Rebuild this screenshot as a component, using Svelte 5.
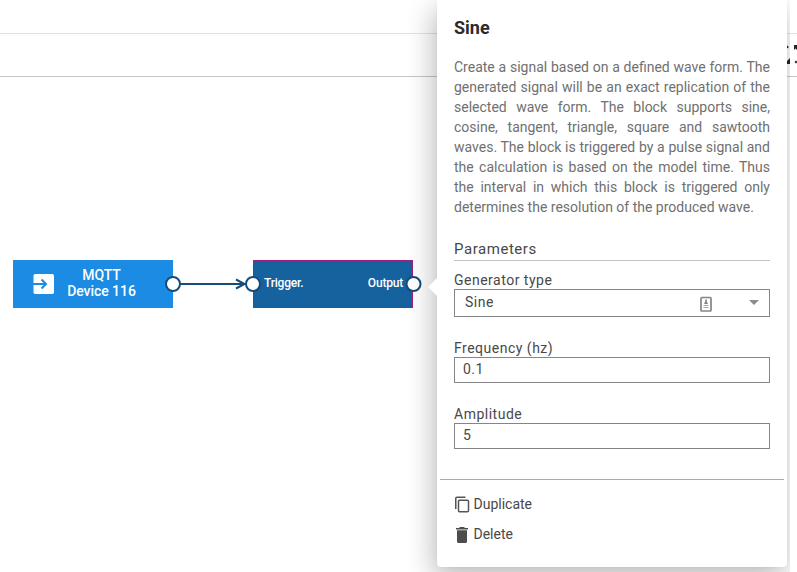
<script>
  const description = [
    'Create a signal based on a defined wave form. The',
    'generated signal will be an exact replication of the',
    'selected wave form. The block supports sine,',
    'cosine, tangent, triangle, square and sawtooth',
    'waves. The block is triggered by a pulse signal and',
    'the calculation is based on the model time. Thus',
    'the interval in which this block is triggered only',
    'determines the resolution of the produced wave.'
  ];
</script>

<div class="editor">
  <header class="topbar"></header>
  <div class="toolbar">
    <svg class="expand" width="12" height="24" viewBox="0 0 12 24" aria-hidden="true">
      <path d="M2 4.500l2 1.500l-2 1.500zM9 4h3v5l-1.500-1.500l-1.500 1.500zM2 23v-3l3-3v6zM9.500 21l1.500-1.500l1 1v1l-1 1z" fill="#262626" />
    </svg>
  </div>

  <main class="canvas">
    <div class="node device">
      <svg width="22" height="22" viewBox="0 0 22 22" aria-hidden="true">
        <rect x=".5" y="1" width="20.500" height="20" rx="1.800" fill="#fff" />
        <path d="M0 11H12M8.500 6.500L13 11L8.500 15.500" fill="none" stroke="#1b8be3" stroke-width="2" />
      </svg>
      <span>MQTT<br />Device 116</span>
    </div>
    <div class="node sine"><span>Trigger.</span><span>Output</span></div>
    <svg class="wires" width="437" height="60" viewBox="0 0 437 60" aria-hidden="true">
      <g fill="none" stroke="#174b7b" stroke-width="2">
        <path d="M180 30H244M236 25.500L244.500 30L236 34.500" />
        <circle cx="173" cy="30" r="7" fill="#fff" />
        <circle cx="253" cy="30" r="7" fill="#fff" />
        <circle cx="413.500" cy="30" r="7" fill="#fff" />
      </g>
    </svg>
  </main>

  <div class="popover">
    <svg class="pointer" width="10" height="20" viewBox="0 0 10 20" aria-hidden="true">
      <path d="M10 0L0 10L10 20z" fill="#fff" />
    </svg>
    <aside class="panel">
      <section class="body">
        <h1>Sine</h1>
        <p>{#each description as line}<span>{line}</span>{/each}</p>
        <h2>Parameters</h2>
        <div class="field first">
          <div class="label">Generator type</div>
          <div class="box select">
            <span>Sine</span>
            <svg class="card" width="12" height="16" viewBox="0 0 12 16" aria-hidden="true">
              <rect x="1" y="1.500" width="10" height="13.500" rx=".8" fill="#fff" stroke="#858585" stroke-width="1.700" />
              <path d="M5.200 3.500h1.600v2l1.200 2.500h-4l1.200-2.500z" fill="#858585" />
              <path d="M3.500 9.500h5M3.500 11.500h5" stroke="#aaa" />
            </svg>
            <svg class="caret" width="10" height="5" viewBox="0 0 10 5" aria-hidden="true"><path d="M0 0h10L5 5z" fill="#8c8c8c" /></svg>
          </div>
        </div>
        <div class="field">
          <div class="label">Frequency (hz)</div>
          <div class="box">0.1</div>
        </div>
        <div class="field">
          <div class="label">Amplitude</div>
          <div class="box">5</div>
        </div>
      </section>
      <footer>
        <div class="action">
          <svg width="16" height="18" viewBox="0 0 16 18" aria-hidden="true">
            <path d="M1.750 13V2.500Q1.750 1.250 3 1.250H11.500M5.500 4.250h8q1 0 1 1v9.500q0 1-1 1h-8q-1 0-1-1v-9.500q0-1 1-1z" fill="none" stroke="#555" stroke-width="1.500" />
          </svg>
          <span>Duplicate</span>
        </div>
        <div class="action">
          <svg width="16" height="18" viewBox="0 0 16 18" aria-hidden="true">
            <path d="M2 2h3l1-1h4l1 1h3v1.500h-12zM3 4.200h10v11.300q0 1.500-1.500 1.500h-7q-1.500 0-1.500-1.500z" fill="#4d4d4d" />
          </svg>
          <span>Delete</span>
        </div>
      </footer>
    </aside>
  </div>
</div>

<style>
  .editor {
    position: relative;
    width: 797px;
    height: 572px;
    overflow: hidden;
    background: #fff;
    font-family: Roboto, "Liberation Sans", sans-serif;
    color: #484848;
  }
  .editor * { box-sizing: border-box; }
  .topbar { height: 34px; border-bottom: 1px solid #e2e2e2; }
  .toolbar {
    height: 43px;
    border-bottom: 1px solid #c6c6c6;
    display: flex;
    justify-content: flex-end;
    padding-top: 7px;
  }
  .expand { display: block; }
  .canvas { height: 495px; }
  .node {
    position: absolute;
    top: 260px;
    width: 160px;
    height: 48px;
    display: flex;
    color: #fff;
    font-weight: 500;
  }
  .device {
    left: 13px;
    align-items: center;
    padding-left: 20px;
    gap: 10px;
    background: #1b8be3;
    font-size: 14px;
    line-height: 16px;
    text-align: center;
  }
  .device span { width: 73px; margin-top: -2px; white-space: nowrap; letter-spacing: -.05px; }
  .sine {
    left: 253px;
    justify-content: space-between;
    padding: 15px 9px 0 10px;
    background: #15629f;
    border: 1px solid #9c1f83;
    font-size: 12px;
    line-height: 14px;
    letter-spacing: -.2px;
  }
  .wires { position: absolute; left: 0; top: 254px; }
  .popover { position: absolute; left: 437px; top: 0; }
  .pointer { position: absolute; left: -9px; top: 277px; z-index: 1; }
  .panel {
    width: 350px;
    height: 567px;
    background: #fff;
    border-radius: 0 0 4px 4px;
    box-shadow: -3px 10px 28px rgba(0, 0, 0, .28), 0 0 3px rgba(0, 0, 0, .04);
    clip-path: inset(0 -3px -5px -30px);
  }
  .body { height: 479px; padding: 18px 17px 0; }
  h1 { margin: 0; font-size: 18px; font-weight: 700; line-height: 20px; color: #2b2b2b; }
  p {
    margin: 19px 0 0;
    font-size: 14px;
    line-height: 20px;
    color: #707070;
  }
  p span { display: block; white-space: nowrap; text-align: justify; text-align-last: justify; }
  p span:last-child { text-align-last: left; }
  h2 {
    margin: 21px 0 0;
    height: 23px;
    border-bottom: 1px solid #c4c4c4;
    font-size: 15px;
    font-weight: 400;
    line-height: 22px;
    letter-spacing: .55px;
  }
  .field { margin-top: 22px; font-size: 14px; letter-spacing: .5px; }
  .field.first { margin-top: 10px; }
  .label { height: 18px; line-height: 19px; }
  .box { height: 26px; border: 1px solid #858585; padding-left: 8px; line-height: 23px; }
  .select { height: 28px; padding: 0 10px; display: flex; align-items: center; line-height: 25px; }
  .select span { flex: 1; margin-top: -2px; }
  .card { margin-right: 37px; margin-top: 1px; }
  .caret { margin-top: -1px; }
  footer { margin: 0 3px; border-top: 1px solid #aaa; padding: 10px 14px; font-size: 14px; }
  .action { height: 30px; display: flex; align-items: center; gap: 3.500px; }
  .action span { margin-top: -2px; }
</style>
